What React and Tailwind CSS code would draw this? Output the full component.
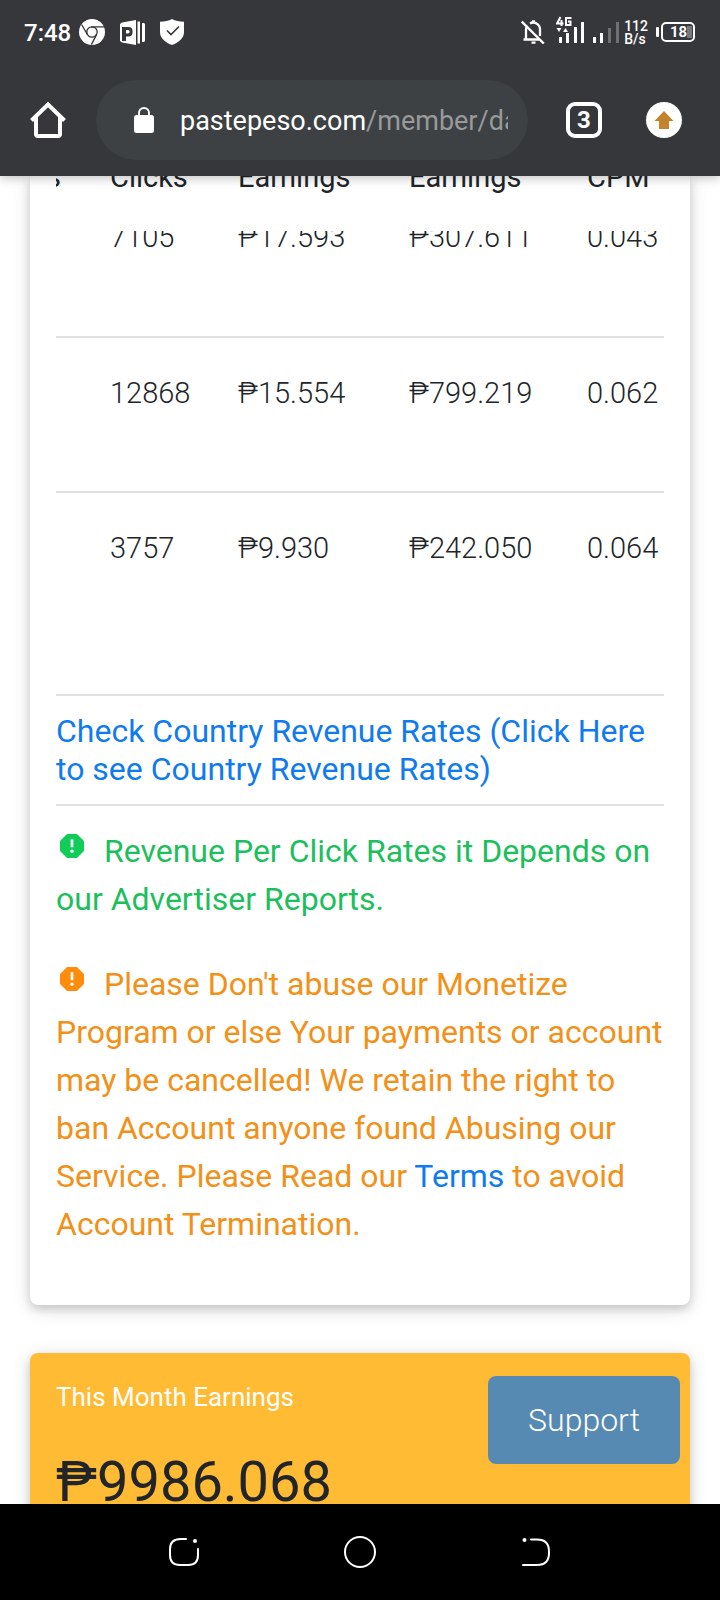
import React from 'react';
import { MdReport } from 'react-icons/md';

const rows = [
    { clicks: '7105', earnings: '₱17.593', total: '₱307.611', cpm: '0.043' },
    { clicks: '12868', earnings: '₱15.554', total: '₱799.219', cpm: '0.062' },
    { clicks: '3757', earnings: '₱9.930', total: '₱242.050', cpm: '0.064' },
];

const Columns = () => (
    <colgroup>
        <col className="w-[54px]" />
        <col className="w-[128px]" />
        <col className="w-[171px]" />
        <col className="w-[178px]" />
        <col />
    </colgroup>
);

const ChromeIcon = () => (
    <svg viewBox="0 0 26 26" className="w-[26px] h-[26px]" fill="none" stroke="#36373b" strokeWidth="1.3">
        <circle cx="13" cy="13" r="13" fill="#fff" stroke="none" />
        <circle cx="13" cy="13" r="5.2" />
        <path d="M12 7.8h14M8.5 15.600 2.6 5.500M17.500 15.600 12.4 25.6" />
    </svg>
);

const PasteIcon = () => (
    <svg viewBox="0 0 25 25" className="w-[25px] h-[25px]">
        <path fill="#fff" d="M2 2.500 16 0v25L2 22.500 0 21V4zM17.500 1.500H20v22h-2.500zM22 3h2l1 1v17l-1 1h-2z" />
        <path fill="#36373b" fillRule="evenodd" d="M2 7h6.500a4 4 0 0 1 4 4v1.500a4 4 0 0 1-4 4H6V21H2zM6 10v3.500h2a1.700 1.700 0 0 0 0-3.500z" />
    </svg>
);

const ShieldIcon = () => (
    <svg viewBox="0 0 24 26" className="w-6 h-[26px]">
        <path fill="#fff" d="M12 0c3 1.800 7.500 2.700 12 2.700V13c0 6-5 10.500-12 13C5 23.500 0 19 0 13V2.700C4.500 2.700 9 1.800 12 0z" />
        <path fill="none" stroke="#36373b" strokeWidth="1.600" d="m7 11.500 4 4 8-8" />
    </svg>
);

const BellOffIcon = () => (
    <svg viewBox="0 0 24 24" className="w-6 h-6" fill="none" stroke="#fff" strokeWidth="2.300">
        <path d="M5 20V9.500c0-1.500.4-2.800 1-3.900M9 3.500C13 1 19 4 19 9.500V16M2.500 19.500H18" />
        <path d="M10.500 22.600h4M11 1.400h3" />
        <path d="m.8 1.500 22 22" strokeWidth="2.400" />
    </svg>
);

const SignalIcons = () => (
    <svg viewBox="0 0 64 28" className="w-16 h-7" fill="#fff">
        <path fill="none" stroke="#fff" strokeWidth="2" d="M4.500 1 1 7.500h6.500M5.500 4v6M15.500 2H10v7h4.500V5.500H12" />
        <path d="M.5 12h5L3 16zM7 16h5l-2.500-4zM3 21h3v6H3zM10 17h3v10h-3zM18 11h3v16h-3zM25 6h3v21h-3zM37 21h3v6h-3zM44 17h3v10h-3z" />
        <path fill="#6f7073" d="M52 12h3v15h-3zM60 6h3v21h-3z" />
    </svg>
);

const BatteryIcon = () => (
    <svg viewBox="0 0 40 20" className="w-10 h-5">
        <rect x="0" y="5" width="3" height="10" rx="1" fill="#fff" />
        <rect x="6" y="1" width="32" height="18" rx="4" fill="none" stroke="#fff" strokeWidth="2" />
        <rect x="31" y="4" width="5" height="12" fill="#77787b" />
        <text x="14" y="15" fill="#fff" fontFamily="Roboto, sans-serif" fontSize="15" fontWeight="700">18</text>
    </svg>
);

const StatusBar = () => (
    <div className="flex h-16 items-center justify-between px-6 text-white">
        <div className="flex items-center">
            <span className="mr-2 pt-px text-2xl font-medium">7:48</span>
            <ChromeIcon />
            <span className="mx-[15px]"><PasteIcon /></span>
            <ShieldIcon />
        </div>
        <div className="flex items-center">
            <BellOffIcon />
            <span className="ml-[11px] mb-1"><SignalIcons /></span>
            <span className="ml-1 mr-2 pt-0.5 text-[14px] leading-[13px] font-medium">112<br />B/s</span>
            <BatteryIcon />
        </div>
    </div>
);

const AddressBar = () => (
    <div className="flex h-28 items-center px-[30px]">
        <button aria-label="Home">
            <svg viewBox="0 0 36 36" className="w-9 h-9" fill="none" stroke="#fff" strokeWidth="4">
                <path d="M1.500 18.500 18 2.500l16.500 16M6 15v17q0 2 2 2h20q2 0 2-2V15" />
            </svg>
        </button>
        <div className="ml-[30px] mr-[38px] flex h-20 min-w-0 flex-1 items-center rounded-full bg-[#3d4143] pl-[38px] pr-5">
            <svg viewBox="0 0 20 26" className="h-[26px] w-5 shrink-0">
                <rect y="8" width="20" height="18" rx="2.500" fill="#fff" />
                <path d="M5 10V6a5 5 0 0 1 10 0v4" fill="none" stroke="#fff" strokeWidth="2" />
            </svg>
            <a href="#dashboard" className="ml-[26px] min-w-0 overflow-hidden pt-0.5 whitespace-nowrap text-[27px] leading-9 text-white">
                pastepeso.com<span className="text-[#989a9b]">/member/da</span>
            </a>
        </div>
        <button className="mr-11 h-9 w-9 shrink-0 rounded-[9px] border-4 border-white text-2xl leading-7 font-bold text-white">3</button>
        <button aria-label="Update available" className="mr-2 shrink-0">
            <svg viewBox="0 0 36 36" className="w-9 h-9">
                <circle cx="18" cy="18" r="18" fill="#fff" />
                <path d="M18 9 27.500 19H23v8H13v-8H8.500z" fill="#c2832c" />
            </svg>
        </button>
    </div>
);

const ReportTable = () => (
    <div>
        <div className="h-[55px] overflow-hidden">
            <table className="-mt-5 w-full table-fixed text-left text-[29px] leading-[42px]">
                <Columns />
                <thead>
                    <tr>
                        <th className="p-0 font-normal"><span className="-ml-[10px] block">s</span></th>
                        <th className="p-0 font-normal">Clicks</th>
                        <th className="p-0 font-normal">Earnings</th>
                        <th className="p-0 font-normal">Earnings</th>
                        <th className="p-0 font-normal">CPM</th>
                    </tr>
                </thead>
            </table>
        </div>
        <div className="overflow-hidden">
            <table className="-mt-[49px] w-full table-fixed text-[29px] leading-[42px] font-light">
                <Columns />
                <tbody>
                    {rows.map((row) => (
                        <tr key={row.clicks} className="h-[155px] border-b-2 border-[#dfe1e2] align-top last:border-b-0">
                            <td className="p-0" />
                            <td className="p-0 pt-[34px]">{row.clicks}</td>
                            <td className="p-0 pt-[34px]">{row.earnings}</td>
                            <td className="p-0 pt-[34px]">{row.total}</td>
                            <td className="p-0 pt-[34px]">{row.cpm}</td>
                        </tr>
                    ))}
                </tbody>
            </table>
        </div>
    </div>
);

const NavBar = () => (
    <nav className="flex h-24 shrink-0 items-center justify-center gap-36 bg-black">
        <button aria-label="Recent apps">
            <svg viewBox="0 0 32 32" className="w-8 h-8" fill="none" stroke="#fff" strokeWidth="2">
                <path d="M18 3h-5Q2 3 2 13v6q0 10 10 10h8q10 0 10-10v-6" strokeLinecap="round" />
                <circle cx="27" cy="5" r="2" fill="#fff" stroke="none" />
            </svg>
        </button>
        <button aria-label="Home screen">
            <svg viewBox="0 0 32 32" className="w-8 h-8" fill="none" stroke="#fff" strokeWidth="2">
                <circle cx="16" cy="16" r="15" />
            </svg>
        </button>
        <button aria-label="Back">
            <svg viewBox="0 0 32 32" className="w-8 h-8" fill="none" stroke="#fff" strokeWidth="2">
                <path d="M11 3.500h6q12 0 12 12v1.500q0 12-12 12H3" strokeLinecap="round" />
                <circle cx="4.500" cy="4" r="2" fill="#fff" stroke="none" />
            </svg>
        </button>
    </nav>
);

const App = () => {
    return (
        <div className="flex h-screen flex-col bg-white font-['Roboto',sans-serif] text-[#212529]">
            <header className="relative z-10 shrink-0 bg-[#36373b] shadow-[0_2px_10px_rgba(0,0,0,0.25)]">
                <StatusBar />
                <AddressBar />
            </header>

            <main className="min-h-0 flex-1 overflow-hidden px-[30px]">
                <section className="rounded-b-lg bg-white px-[26px] pb-[57px] shadow-[0_4px_10px_rgba(0,0,0,0.16),0_4px_20px_rgba(0,0,0,0.12)]">
                    <ReportTable />

                    <div className="mt-[47px] border-y-2 border-[#dfe1e2] py-4 text-[32px] leading-[38px]">
                        <a href="#rates" className="text-[#107bf0]">
                            Check Country Revenue Rates (Click Here to see Country Revenue Rates)
                        </a>
                    </div>

                    <p className="mt-[21px] text-[32px] leading-[48px] text-[#1cbf5c]">
                        <MdReport className="mr-2 inline h-8 w-8 align-baseline text-[#10cc58]" /> Revenue Per Click Rates it Depends on our Advertiser Reports.
                    </p>

                    <p className="mt-[37px] text-[32px] leading-[48px] text-[#f39017]">
                        <MdReport className="mr-2 inline h-8 w-8 align-baseline text-[#ff8c0c]" /> Please Don't abuse our Monetize Program or else Your payments or account may be cancelled! We retain the right to ban Account anyone found Abusing our Service. Please Read our <a href="#terms" className="text-[#107bf0]">Terms</a> to avoid Account Termination.
                    </p>
                </section>

                <section className="mt-12 flex items-start justify-between rounded-t-lg bg-[#ffbb33] pl-[26px] pr-[10px] shadow-[0_4px_10px_rgba(0,0,0,0.16),0_4px_20px_rgba(0,0,0,0.12)]">
                    <div>
                        <h2 className="mt-[26px] text-[26px] leading-9 text-white">This Month Earnings</h2>
                        <p className="mt-[33px] text-[56px] leading-[68px]">₱9986.068</p>
                    </div>
                    <button className="mt-[23px] h-[88px] w-48 rounded-lg bg-[#568ab3] text-[32px] font-light text-white">Support</button>
                </section>
            </main>

            <NavBar />
        </div>
    );
};

export default App;
